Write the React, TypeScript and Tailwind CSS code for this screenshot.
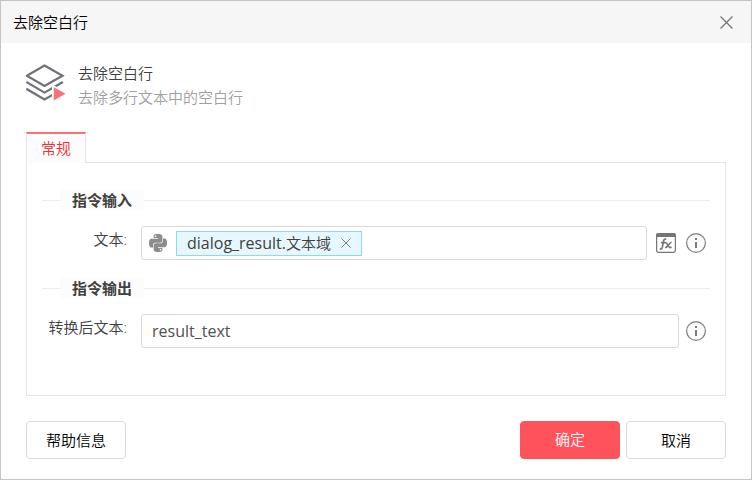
import { useState, type ReactNode } from "react";
import { SiPython } from "react-icons/si";

function CloseGlyph({ size }: { size: number }) {
  return (
    <svg width={size} height={size} viewBox="0 0 12 12" fill="none" stroke="currentColor" strokeWidth="1.2" aria-hidden="true">
      <path d="M0.5 0.5 L11.5 11.5 M11.5 0.5 L0.5 11.5" />
    </svg>
  );
}

function LayersIcon() {
  return (
    <svg width="40" height="42" viewBox="0 0 40 42" fill="none" aria-hidden="true">
      <g stroke="#707078" strokeWidth="2.2">
        <path d="M18.5 1.5 L36.5 11.7 L18.5 22 L0.8 11.7 Z" />
        <path d="M0.3 18 L18.5 28.6 L36.9 18" />
        <path d="M0.3 24.8 L18.5 35.4 L27 30.6" />
      </g>
      <path d="M26 20.5 L42 29 L26 40 Z" fill="#fff" />
      <path d="M27.8 23.2 L39.5 29.7 L27.8 36.4 Z" fill="#f97276" />
    </svg>
  );
}

function InfoButton() {
  return (
    <button type="button" aria-label="说明" className="h-5 w-5 shrink-0">
      <svg width="20" height="20" viewBox="0 0 20 20" aria-hidden="true">
        <circle cx="10" cy="10" r="9.4" fill="#fcfcfc" stroke="#7d7d7d" strokeWidth="1.2" />
        <rect x="9" y="5" width="2" height="2" fill="#7d7d7d" />
        <rect x="9" y="9" width="2" height="6" fill="#7d7d7d" />
      </svg>
    </button>
  );
}

function FxButton() {
  return (
    <button type="button" aria-label="表达式" className="h-5 w-5 shrink-0">
      <svg width="20" height="20" viewBox="0 0 20 20" fill="none" stroke="#757575" aria-hidden="true">
        <rect x="0.6" y="0.6" width="18.8" height="18.8" rx="1.8" strokeWidth="1.2" />
        <path d="M0.6 2.2 H19.4" strokeWidth="3.6" />
        <path d="M10.2 6.3 C8.6 5.5 7.9 6.5 7.5 8.5 L6.4 14 C6 16 5.2 16.5 3.8 15.8 M5 9.6 H9.6" strokeWidth="1.6" />
        <path d="M9.2 9.9 C11.6 8.7 11.6 14.4 14.6 14.6 L15.4 13.9 M15.6 9.3 C13.4 9 11.8 15.2 9 14.5" strokeWidth="1.6" />
      </svg>
    </button>
  );
}

function Section({ title, children }: { title: string; children: ReactNode }) {
  return (
    <section>
      <div className="flex h-5 items-center">
        <span className="h-px w-[18px] bg-[#ececec]" />
        <h3 className="w-[84px] bg-[#fcfcfc] pl-3 text-[15px] leading-5 font-bold text-[#404040]">{title}</h3>
        <span className="h-px flex-1 bg-[#ececec]" />
      </div>
      <div className="mt-4 flex items-center pr-1">{children}</div>
    </section>
  );
}

const labelClass = "w-[99px] shrink-0 pr-3.5 pb-2 text-right whitespace-nowrap text-[#404040]";
const buttonClass = "h-[38px] w-[100px] rounded border text-[15px]";

export default function App() {
  const [bound, setBound] = useState(true);
  const [text, setText] = useState("");
  const [result, setResult] = useState("result_text");

  return (
    <main className="flex min-h-screen flex-col border border-[#c4c4c4] bg-white font-['Open_Sans','Noto_Sans_CJK_SC',sans-serif] text-[15px] leading-5 font-[350] text-black">
      <header className="flex h-[42px] items-center justify-between bg-[#f6f6f6] pr-[18px] pl-3">
        <h1 className="font-[350]">去除空白行</h1>
        <button type="button" aria-label="关闭" className="text-[#777]">
          <CloseGlyph size={13} />
        </button>
      </header>

      <div className="px-[25px] pt-[18px]">
        <div className="flex items-center gap-3">
          <LayersIcon />
          <div className="leading-6">
            <h2 className="font-[350] text-[#404040]">去除空白行</h2>
            <p className="text-[#a0a0a0]">去除多行文本中的空白行</p>
          </div>
        </div>

        <div className="mt-[23px]">
          <div role="tablist" className="flex">
            <button
              type="button"
              role="tab"
              aria-selected="true"
              className="z-10 -mb-px h-[31px] w-[60px] border-x border-t-2 border-x-[#e4e4e4] border-t-[#f97276] bg-[#fcfcfc] pb-0.5 text-[#f02d37]"
            >
              常规
            </button>
          </div>
          <div role="tabpanel" className="flex flex-col gap-[18px] border border-[#e4e4e4] px-[15px] pt-[27px] pb-[47px]">
            <Section title="指令输入">
              <label htmlFor="text" className={labelClass}>文本:</label>
              <div className="flex h-[34px] min-w-0 flex-1 items-center rounded-[3px] border border-[#d9d9d9] bg-white pr-2 pl-[7px]">
                <SiPython size={18} color="#8c8c8c" className="shrink-0" aria-hidden="true" />
                {bound && (
                  <span className="ml-[9px] flex h-[25px] shrink-0 items-center gap-2.5 border border-[#91d5ff] bg-[#e6f7ff] px-2.5 text-[#404040]">
                    <span>
                      <span className="text-base leading-5 font-normal">dialog_result.</span>文本域
                    </span>
                    <button type="button" aria-label="移除" className="text-[#808080]" onClick={() => setBound(false)}>
                      <CloseGlyph size={10} />
                    </button>
                  </span>
                )}
                <input
                  id="text"
                  type="text"
                  value={text}
                  onChange={(e) => setText(e.target.value)}
                  className="ml-2 min-w-0 flex-1 outline-none"
                />
              </div>
              <div className="ml-[9px] flex gap-2.5">
                <FxButton />
                <InfoButton />
              </div>
            </Section>
            <Section title="指令输出">
              <label htmlFor="result" className={labelClass}>转换后文本:</label>
              <input
                id="result"
                type="text"
                value={result}
                onChange={(e) => setResult(e.target.value)}
                className="mr-[7px] h-[34px] min-w-0 flex-1 rounded-[3px] border border-[#d9d9d9] bg-white px-2.5 text-base font-normal text-[#505050] outline-none"
              />
              <InfoButton />
            </Section>
          </div>
        </div>
      </div>

      <footer className="flex gap-1.5 px-[25px] pt-[25px] pb-5">
        <button type="button" className={`${buttonClass} mr-auto border-[#d9d9d9] bg-white`}>帮助信息</button>
        <button type="button" className={`${buttonClass} border-[#ff525b] bg-[#ff525b] pb-0.5 text-white`}>确定</button>
        <button type="button" className={`${buttonClass} border-[#d9d9d9] bg-white`}>取消</button>
      </footer>
    </main>
  );
}
